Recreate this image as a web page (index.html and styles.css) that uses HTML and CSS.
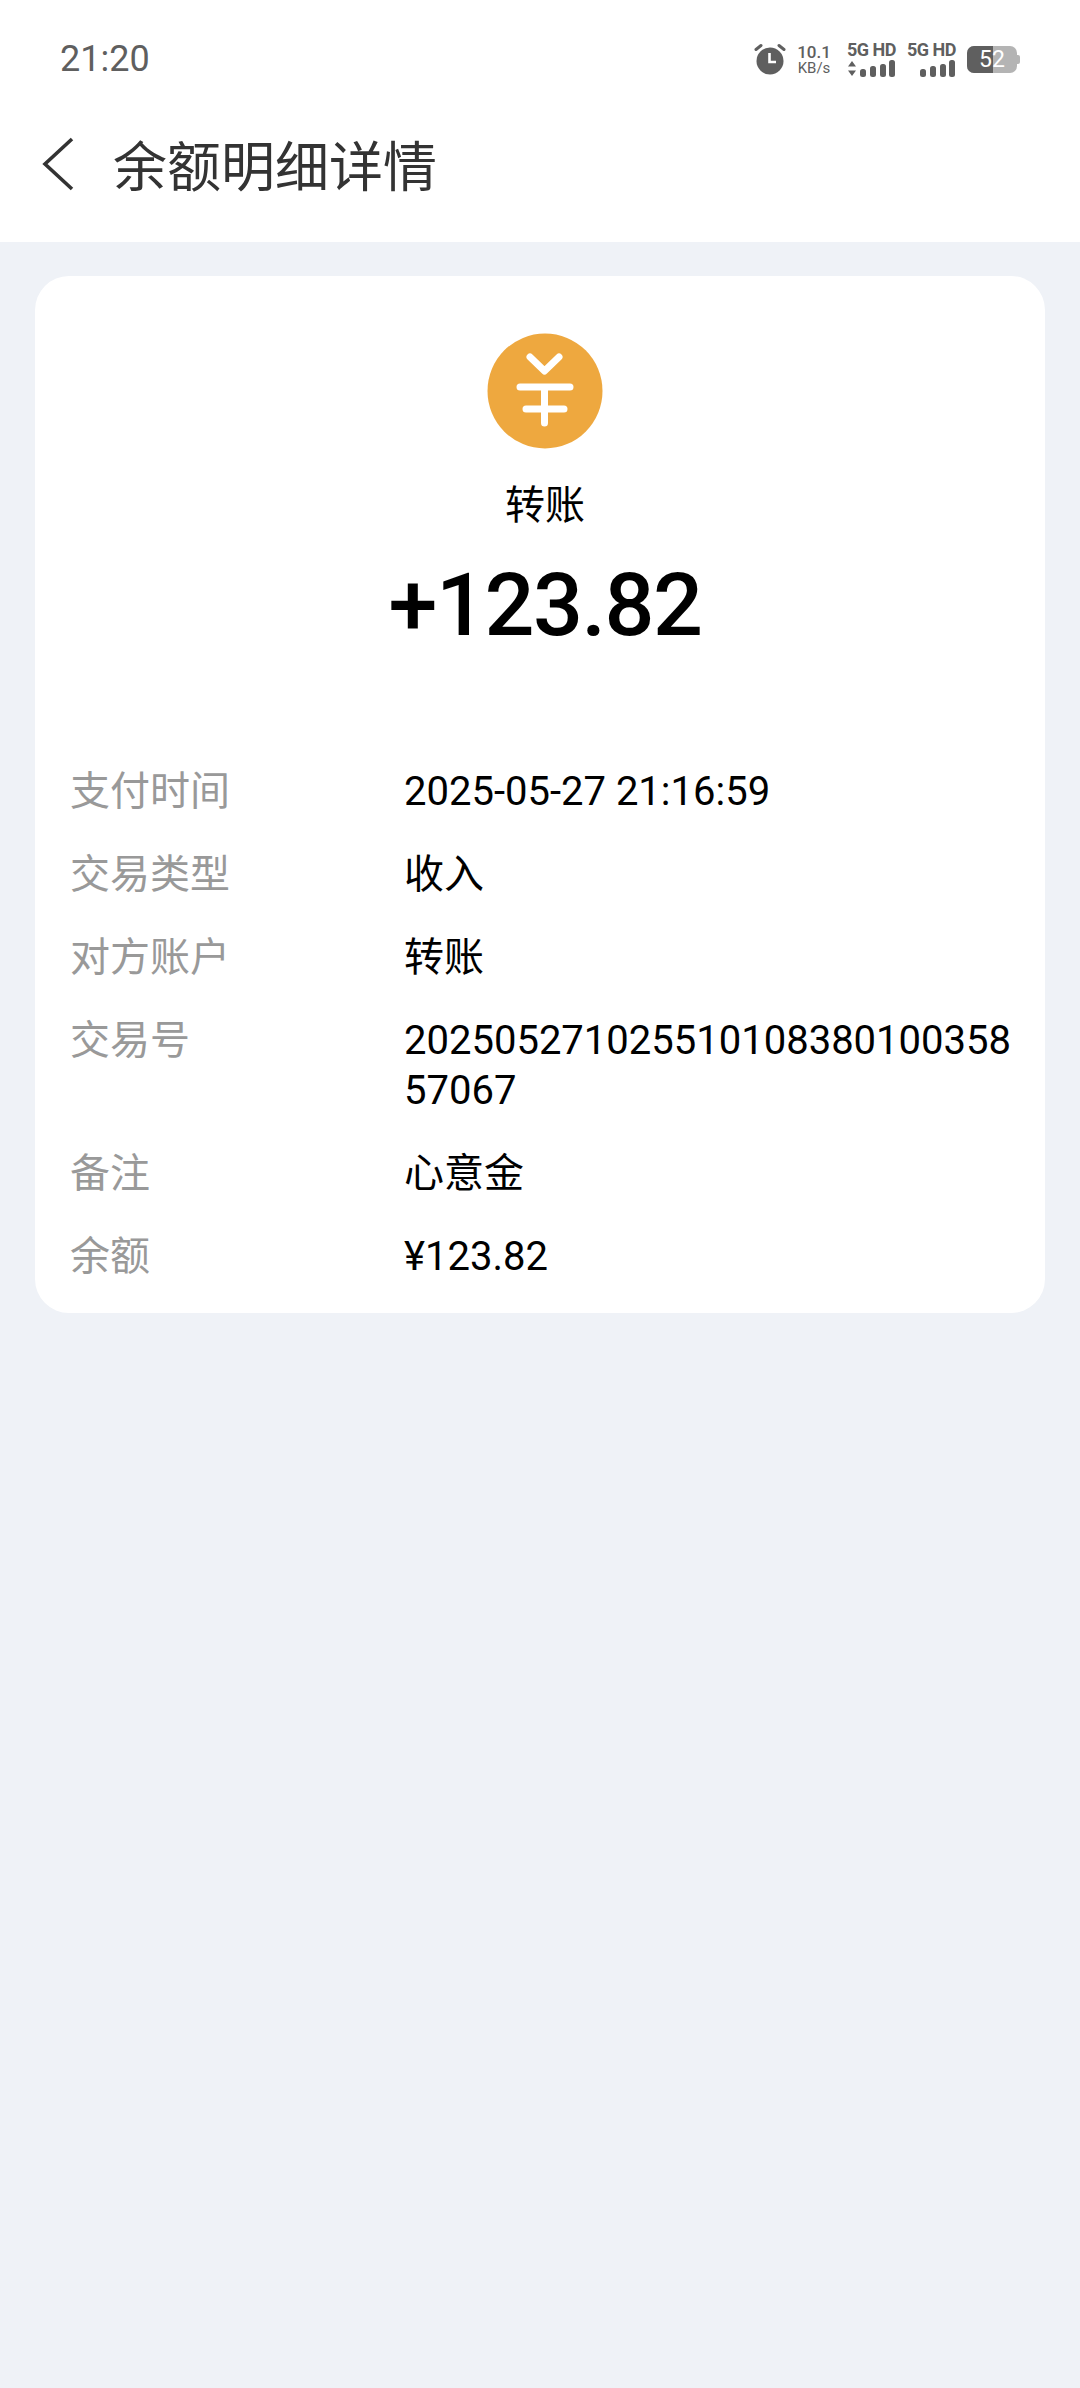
FILE: index.html
```html
<!DOCTYPE html>
<html lang="zh-CN">
<head>
<meta charset="utf-8">
<title>余额明细详情</title>
<link rel="stylesheet" href="styles.css">
</head>
<body>
<header class="top">
  <div class="status">
    <span class="clock">21:20</span>
    <div class="indicators">
      <svg class="alarm" width="32" height="32" viewBox="0 0 32 32">
        <circle cx="16" cy="18" r="13.500" fill="#5f5f5f"/>
        <path d="M15.500 10v9h6.500" fill="none" stroke="#fff" stroke-width="2.600"/>
        <path d="M2 6.500 7 2.500M30 6.500 25 2.500" stroke="#5f5f5f" stroke-width="3" stroke-linecap="round"/>
      </svg>
      <div class="speed"><span class="speed-num">10.1</span><span class="speed-unit">KB/s</span></div>
      <div class="sim">
        <span class="sim-label">5G HD</span>
        <svg width="49" height="17" viewBox="0 0 49 17">
          <path d="M1 6.500 5 1l4 5.500zM1 10.500h8l-4 5.500z" fill="#5f5f5f"/>
          <rect x="13" y="9" width="6" height="8" rx="2.500" fill="#5f5f5f"/>
          <rect x="23" y="6" width="6" height="11" rx="2.500" fill="#5f5f5f"/>
          <rect x="33" y="4" width="6" height="13" rx="2.500" fill="#5f5f5f"/>
          <rect x="42" y="0" width="6" height="17" rx="2.500" fill="#5f5f5f"/>
        </svg>
      </div>
      <div class="sim">
        <span class="sim-label">5G HD</span>
        <svg width="49" height="17" viewBox="0 0 49 17">
          <rect x="13" y="9" width="6" height="8" rx="2.500" fill="#5f5f5f"/>
          <rect x="23" y="6" width="6" height="11" rx="2.500" fill="#5f5f5f"/>
          <rect x="33" y="4" width="6" height="13" rx="2.500" fill="#5f5f5f"/>
          <rect x="42" y="0" width="6" height="17" rx="2.500" fill="#5f5f5f"/>
        </svg>
      </div>
      <div class="battery"><span class="battery-level"></span><span class="battery-num">52</span></div>
    </div>
  </div>
  <div class="nav">
    <svg class="back" width="34" height="54" viewBox="0 0 34 54">
      <path d="M31 2 4 27l27 25" fill="none" stroke="#333" stroke-width="3.600"/>
    </svg>
    <h1 class="title">余额明细详情</h1>
  </div>
</header>
<main class="page">
  <section class="card">
    <div class="summary">
      <svg class="coin" width="116" height="116" viewBox="0 0 116 116">
        <circle cx="58" cy="58" r="57.500" fill="#eea83f"/>
        <path d="M43 24 57.500 38 72 24M33 54H83M39 76H77M57.500 54V90" fill="none" stroke="#fff" stroke-width="7" stroke-linecap="round" stroke-linejoin="round"/>
      </svg>
      <div class="kind">转账</div>
      <div class="amount">+123.82</div>
    </div>
    <dl class="rows">
      <div class="row"><dt>支付时间</dt><dd>2025-05-27 21:16:59</dd></div>
      <div class="row"><dt>交易类型</dt><dd>收入</dd></div>
      <div class="row"><dt>对方账户</dt><dd>转账</dd></div>
      <div class="row"><dt>交易号</dt><dd>20250527102551010838010035857067</dd></div>
      <div class="row"><dt>备注</dt><dd>心意金</dd></div>
      <div class="row"><dt>余额</dt><dd>¥123.82</dd></div>
    </dl>
  </section>
</main>
</body>
</html>
```
FILE: styles.css
```css
* { box-sizing: border-box; }
html, body { margin: 0; height: 100%; }
body {
  width: 1080px;
  height: 2388px;
  background: #eff2f7;
  font-family: Roboto, "Noto Sans CJK SC", sans-serif;
  overflow: hidden;
}
.top { background: #fff; height: 242px; }
.status {
  height: 100px;
  padding: 18px 63px 0 60px;
  display: flex;
  align-items: center;
  justify-content: space-between;
}
.clock { font-size: 36px; font-weight: 400; color: #5f5f5f; }
.indicators { display: flex; align-items: center; gap: 11px; }
.alarm { display: block; }
.speed { display: flex; flex-direction: column; align-items: center; color: #5f5f5f; width: 34px; margin-right: 5px; }
.speed-num { font-size: 17px; font-weight: 500; line-height: 18px; }
.speed-unit { font-size: 15px; font-weight: 400; line-height: 15px; }
.sim { display: flex; flex-direction: column; align-items: flex-end; width: 49px; color: #5f5f5f; }
.sim-label { font-size: 18px; font-weight: 700; line-height: 16px; letter-spacing: -0.5px; white-space: nowrap; margin-bottom: 2px; }
.sim svg { display: block; }
.battery {
  position: relative;
  width: 50px;
  height: 27px;
  border-radius: 7px;
  background: #b4b4b4;
  display: flex;
  align-items: center;
  justify-content: center;
}
.battery::after {
  content: "";
  position: absolute;
  right: -3px;
  top: 9px;
  width: 3px;
  height: 9px;
  border-radius: 0 2px 2px 0;
  background: #b4b4b4;
}
.battery-level { position: absolute; left: 0; top: 0; bottom: 0; width: 26px; background: #5f5f5f; border-radius: 7px 0 0 7px; }
.battery-num { position: relative; font-size: 23px; color: #fff; line-height: 27px; }
.nav { display: flex; align-items: center; height: 142px; padding: 0 0 15px 41px; }
.back { display: block; }
.title { margin: 0 0 0 38px; font-size: 54px; font-weight: 400; color: #333; }
.page { padding: 34px 35px 0; }
.card {
  background: #fff;
  border-radius: 34px;
  height: 1037px;
  padding: 57px 0 0;
}
.summary { display: flex; flex-direction: column; align-items: center; margin-left: 10px; }
.coin { display: block; }
.kind { margin-top: 30px; font-size: 40px; line-height: 54px; color: #000; }
.amount { margin-top: 22px; font-size: 88px; line-height: 100px; font-weight: 500; letter-spacing: -1.5px; color: #000; }
.rows { margin: 112px 0 0; padding: 0 0 0 35px; }
.row { display: flex; margin-bottom: 33px; }
.row dt { width: 334px; flex: none; font-size: 40px; line-height: 50px; color: #999; }
.row dd { margin: 0; width: 620px; font-size: 40px; line-height: 50px; color: #000; word-break: break-all; }
```
